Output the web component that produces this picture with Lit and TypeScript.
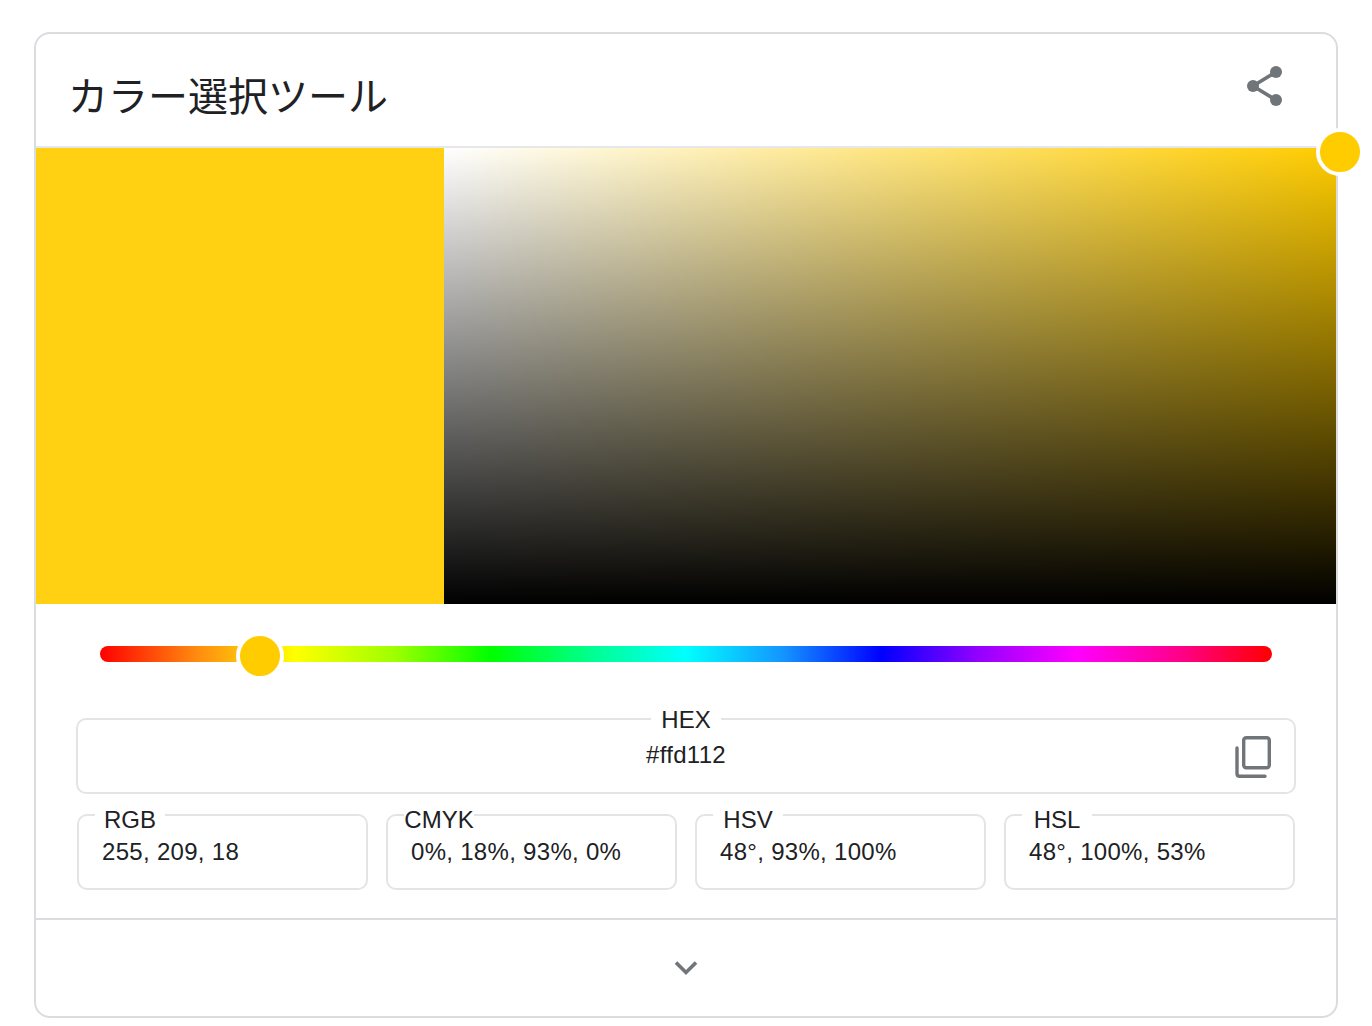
import { LitElement, html, css } from "lit";
import { customElement } from "lit/decorators.js";

const FIELDS = [
  { label: "RGB", value: "255, 209, 18" },
  { label: "CMYK", value: "0%, 18%, 93%, 0%" },
  { label: "HSV", value: "48°, 93%, 100%" },
  { label: "HSL", value: "48°, 100%, 53%" },
];

@customElement("app-root")
export class AppRoot extends LitElement {
  static styles = css`
    :host {
      display: block;
      padding: 32px 34px 8px;
      background: #fff;
      color: #202124;
      font-family: "Liberation Sans", Arial, sans-serif;
      font-size: 24px;
    }
    .card {
      position: relative;
      box-sizing: border-box;
      width: 1304px;
      height: 986px;
      border: 2px solid #dadce0;
      border-radius: 16px;
    }
    .header {
      box-sizing: border-box;
      height: 114px;
      border-bottom: 2px solid #e6e7ea;
      display: flex;
      align-items: flex-start;
      justify-content: space-between;
      padding: 34px 50px 0 32px;
    }
    .title {
      font-family: "Noto Sans CJK JP", sans-serif;
      font-size: 40px;
      line-height: 52px;
      font-weight: 400;
    }
    .share {
      display: block;
      margin-top: -2px;
    }
    .picker {
      display: flex;
      height: 456px;
    }
    .swatch {
      width: 408px;
      background: #ffd112;
    }
    .area {
      flex: 1;
      background: linear-gradient(to bottom, rgba(0, 0, 0, 0), #000),
        linear-gradient(to right, #fff, #fc0);
    }
    .handle {
      position: absolute;
      box-sizing: content-box;
      width: 40px;
      height: 40px;
      border: 4px solid #fff;
      border-radius: 50%;
      background: #fc0;
    }
    .handle.corner {
      left: 1280px;
      top: 94px;
    }
    .slider {
      position: relative;
      height: 16px;
      margin: 42px 64px 56px;
      border-radius: 8px;
      background: linear-gradient(
        to right,
        #f00 0%,
        #ff8c10 8.33%,
        #ff0 16.67%,
        #a0ff00 25%,
        #0f0 33.33%,
        #00ff8c 41.67%,
        #0ff 50%,
        #1494ff 58.33%,
        #00f 66.67%,
        #9400ff 75%,
        #f0f 83.33%,
        #ff0090 91.67%,
        #f00 100%
      );
    }
    .handle.hue {
      left: 136px;
      top: -14px;
    }
    .box {
      position: relative;
      box-sizing: border-box;
      height: 76px;
      border: 2px solid #e4e4e4;
      border-radius: 10px;
    }
    .value {
      letter-spacing: 0.3px;
      white-space: nowrap;
    }
    .hex {
      margin: 0 40px 20px;
      text-align: center;
      line-height: 28px;
      padding-top: 21px;
    }
    .hex .label {
      top: -14px;
      left: 50%;
      transform: translateX(-50%);
    }
    .label {
      position: absolute;
      top: -10px;
      left: 16px;
      width: 70px;
      line-height: 28px;
      text-align: center;
      white-space: nowrap;
      background: #fff;
    }
    .copy {
      position: absolute;
      right: 20px;
      top: 14px;
      display: block;
    }
    .fields {
      display: grid;
      grid-template-columns: repeat(4, 291px);
      column-gap: 18px;
      margin-left: 41px;
    }
    .fields .box {
      padding: 22px 0 0 23px;
      line-height: 28px;
    }
    .footer {
      box-sizing: border-box;
      height: 98px;
      margin-top: 28px;
      border-top: 2px solid #dadce0;
      display: flex;
      align-items: center;
      justify-content: center;
    }
    .footer svg {
      display: block;
    }
  `;

  render() {
    return html`
      <div class="card">
        <div class="header">
          <div class="title">カラー選択ツール</div>
          <svg class="share" width="40" height="44" viewBox="0 0 40 44" aria-hidden="true">
            <path d="M30 6 L7 20 L30 34" fill="none" stroke="#70757a" stroke-width="3.6" />
            <circle cx="30" cy="6" r="6" fill="#70757a" />
            <circle cx="7" cy="20" r="6" fill="#70757a" />
            <circle cx="30" cy="34" r="6" fill="#70757a" />
          </svg>
        </div>
        <div class="picker">
          <div class="swatch"></div>
          <div class="area"></div>
        </div>
        <div class="handle corner"></div>
        <div class="slider"><div class="handle hue"></div></div>
        <div class="box hex">
          <span class="label">HEX</span>
          <span class="value">#ffd112</span>
          <svg class="copy" width="40" height="44" viewBox="0 0 40 44" aria-hidden="true">
            <rect x="9.7" y="3.7" width="25.6" height="30" rx="2.5" fill="none" stroke="#70757a" stroke-width="3.4" />
            <path d="M3 14 V39.5 Q3 42.3 5.8 42.3 H31" fill="none" stroke="#70757a" stroke-width="3.4" stroke-linecap="round" />
          </svg>
        </div>
        <div class="fields">
          ${FIELDS.map(
            (f) =>
              html`<div class="box">
                <span class="label">${f.label}</span><span class="value">${f.value}</span>
              </div>`
          )}
        </div>
        <div class="footer">
          <svg width="24" height="16" viewBox="0 0 24 16" aria-hidden="true">
            <path d="M2 2.5 L12 12.5 L22 2.5" fill="none" stroke="#70757a" stroke-width="3.6" />
          </svg>
        </div>
      </div>
    `;
  }
}
